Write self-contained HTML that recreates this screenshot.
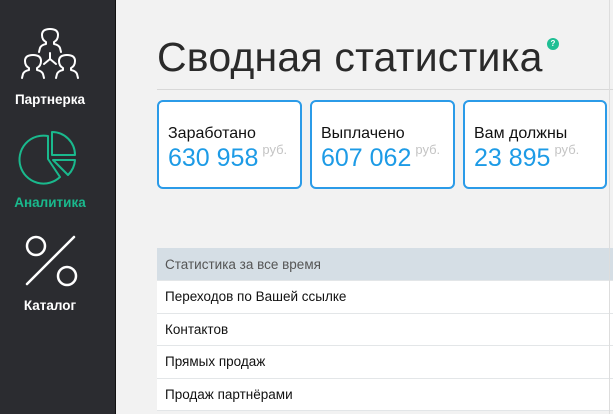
<!DOCTYPE html>
<html><head><meta charset="utf-8"><style>
*{margin:0;padding:0;box-sizing:border-box}
body{width:613px;height:414px;overflow:hidden;background:#f2f2f2;font-family:"Liberation Sans",sans-serif;position:relative}
.side{position:absolute;left:0;top:0;width:116px;height:414px;background:#2b2c30;border-right:1px solid #111}
.lbl{position:absolute;left:0;width:100px;text-align:center;font-size:13.5px;font-weight:bold;color:#fff}
.ico{position:absolute;left:0;top:0}
h1{position:absolute;left:157px;top:34px;font-weight:normal;font-size:41px;color:#2a2a2a;letter-spacing:0.2px}
.q{position:absolute;left:547px;top:38px;width:12px;height:12px;border-radius:50%;background:#1fbf94;color:#fff;font-size:8px;text-align:center;line-height:12px;font-weight:bold}
.hr{position:absolute;left:157px;top:89px;width:456px;height:1px;background:#d8d8d8}
.card{position:absolute;top:100px;height:89px;background:#fff;border:2px solid #2b9be8;border-radius:6px}
.card .t{position:absolute;left:9px;top:23px;font-size:16px;color:#111}
.card .n{position:absolute;left:9px;top:42px;font-size:25px;color:#1d9be6}
.card .r{font-size:13px;color:#c4c4c4;vertical-align:top;position:relative;top:-2px;margin-left:4px}
.tbl{position:absolute;left:157px;top:248px;width:456px}
.row{height:32.5px;line-height:32px;padding-left:8px;font-size:13.5px;color:#111;background:#fff;border-bottom:1px solid #e3e6e8}
.hd{background:#d5dee5;color:#555;height:33px;line-height:34px}
.rb{position:absolute;left:609px;top:0;width:1px;height:414px;background:#ddd}
</style></head><body>
<div class="side">
<svg class="ico" width="116" height="414" viewBox="0 0 116 414" fill="none" stroke-linecap="round" stroke-linejoin="round">
<g stroke="#fff" stroke-width="2">
<path d="M39 52 l1-4 q1-3 6-4 v-2 q-4-2-4-7 q0-6 8-6 q8 0 8 6 q0 5-4 7 v2 q5 1 6 4 l1 4"/>
<path d="M50 53 v6 l-6 5 M50 59 l6 5"/>
<path d="M22 78 l1-4 q1-3 6-4 v-2 q-4-2-4-7 q0-6 8-6 q8 0 8 6 q0 5-4 7 v2 q5 1 6 4 l1 4"/>
<path d="M56 78 l1-4 q1-3 6-4 v-2 q-4-2-4-7 q0-6 8-6 q8 0 8 6 q0 5-4 7 v2 q5 1 6 4 l1 4"/>
</g>
<g stroke="#1ab98d" stroke-width="2">
<path d="M48 136 A24 24 0 1 0 60 177 L48 159 Z"/>
<path d="M52 132 A23 23 0 0 1 75 155 H52 Z"/>
<path d="M53 160 H75 A23 23 0 0 1 68 175 Z"/>
</g>
<g stroke="#fff" stroke-width="2.5">
<circle cx="36" cy="246" r="9"/><circle cx="67" cy="276" r="9"/><path d="M74 237 L27 284"/>
</g>
</svg>
<div class="lbl" style="top:92px">Партнерка</div>
<div class="lbl" style="top:195px;color:#1ab98d">Аналитика</div>
<div class="lbl" style="top:298px">Каталог</div>
</div>
<h1>Сводная статистика</h1>
<div class="q">?</div>
<div class="hr"></div>
<div class="card" style="left:157px;width:145px"><div class="t">Заработано</div><div class="n">630 958<span class="r">руб.</span></div></div>
<div class="card" style="left:310px;width:145px"><div class="t">Выплачено</div><div class="n">607 062<span class="r">руб.</span></div></div>
<div class="card" style="left:463px;width:144px"><div class="t">Вам должны</div><div class="n">23 895<span class="r">руб.</span></div></div>
<div class="tbl">
<div class="row hd">Статистика за все время</div>
<div class="row">Переходов по Вашей ссылке</div>
<div class="row">Контактов</div>
<div class="row">Прямых продаж</div>
<div class="row">Продаж партнёрами</div>
</div>
<div class="rb"></div>
</body></html>
